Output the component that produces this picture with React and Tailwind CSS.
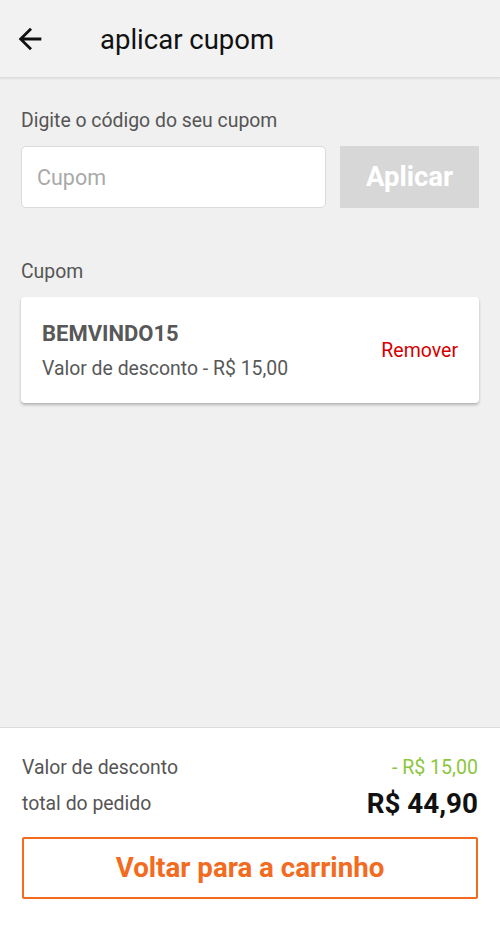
const font = { fontFamily: "Roboto, 'Noto Sans', sans-serif" };

function BackArrow() {
    return (
        <svg width="34" height="34" viewBox="0 0 24 24" fill="#111">
            <path d="M20 11H7.83l5.59-5.59L12 4l-8 8 8 8 1.41-1.41L7.83 13H20v-2z" />
        </svg>
    );
}

export default function App() {
    return (
        <div
            className="flex h-[928px] w-[500px] flex-col bg-[#f0f0f0] font-[Roboto,sans-serif]"
            style={font}
        >
            <header className="flex h-[78px] shrink-0 items-center border-b border-[#dedede] bg-[#f2f2f2] shadow-[0_1px_2px_rgba(0,0,0,0.08)]">
                <button className="ml-[13px] flex items-center">
                    <BackArrow />
                </button>
                <h1 className="ml-[53px] mt-[2px] text-[27.5px] leading-none text-[#111]">aplicar cupom</h1>
            </header>

            <main className="flex-1 px-[21px]">
                <p className="mt-[31px] text-[19.4px] leading-[24px] text-[#555]">
                    Digite o código do seu cupom
                </p>
                <div className="mt-[13px] flex gap-[14px]">
                    <input
                        placeholder="Cupom"
                        className="h-[62px] w-[305px] rounded-[5px] border border-[#dadada] bg-white px-[15px] text-[21.5px] text-[#333] placeholder:text-[#a9a9a9] focus:outline-none"
                    />
                    <button className="h-[62px] flex-1 bg-[#d7d7d7] text-[27.5px] font-bold text-white">
                        Aplicar
                    </button>
                </div>

                <p className="mt-[52px] text-[19.4px] leading-[24px] text-[#555]">Cupom</p>
                <div className="mt-[13px] flex h-[106px] items-center justify-between rounded-[4px] bg-white pl-[21px] pr-[21px] shadow-[0_2px_3px_rgba(0,0,0,0.25)]">
                    <div className="mt-[2px] flex flex-col">
                        <span className="text-[22px] font-bold leading-[26px] text-[#585858]">BEMVINDO15</span>
                        <span className="mt-[10px] text-[19.4px] leading-[24px] text-[#585858]">
                            Valor de desconto - R$ 15,00
                        </span>
                    </div>
                    <button className="mt-[2px] text-[19.5px] text-[#d50000]">Remover</button>
                </div>
            </main>

            <footer className="h-[201px] shrink-0 border-t border-[#dcdcdc] bg-white px-[22px]">
                <div className="mt-[28px] flex items-center justify-between">
                    <span className="text-[19.4px] leading-[24px] text-[#555]">Valor de desconto</span>
                    <span className="text-[19.6px] leading-[24px] text-[#8cc63e]">- R$ 15,00</span>
                </div>
                <div className="mt-[10px] flex items-center justify-between">
                    <span className="text-[19.4px] leading-[28px] text-[#555]">total do pedido</span>
                    <span className="text-[27.8px] font-bold leading-[28px] text-[#111]">R$ 44,90</span>
                </div>
                <button className="mt-[19px] flex h-[62px] w-full items-center justify-center rounded-[2px] border-2 border-[#f26b1f] text-[27.7px] font-bold text-[#f26b1f]">
                    Voltar para a carrinho
                </button>
            </footer>
        </div>
    );
}
